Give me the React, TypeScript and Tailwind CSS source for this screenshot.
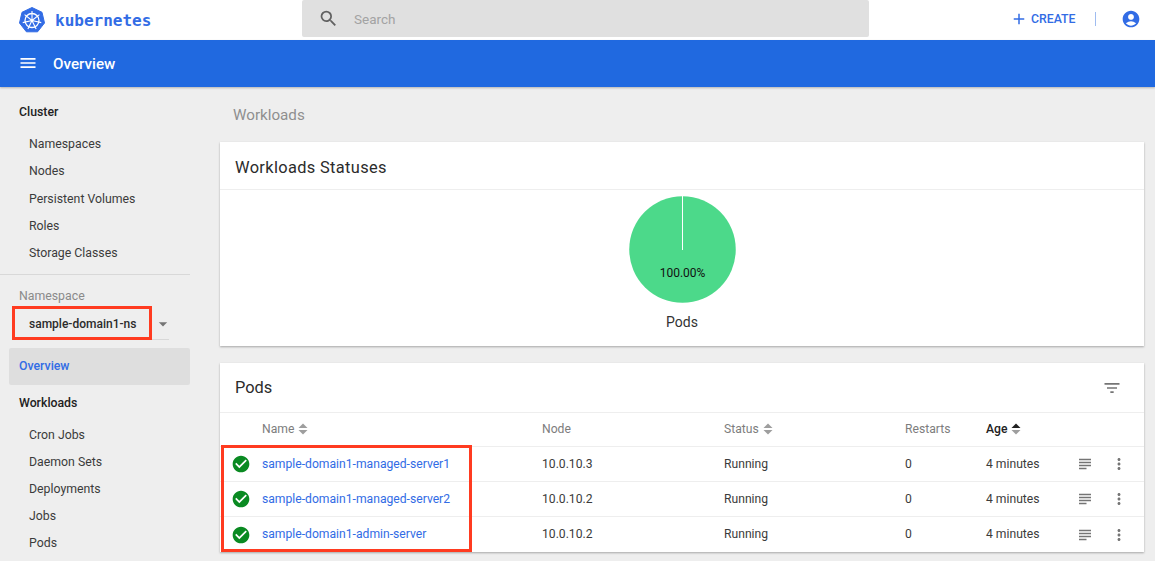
import { MdAccountCircle, MdAdd, MdArrowDropDown, MdCheckCircle, MdFilterList, MdMenu, MdMoreVert, MdSearch, MdSubject } from 'react-icons/md';

const clusterItems = ['Namespaces', 'Nodes', 'Persistent Volumes', 'Roles', 'Storage Classes'];
const workloadItems = ['Cron Jobs', 'Daemon Sets', 'Deployments', 'Jobs', 'Pods'];

const pods = [
  { name: 'sample-domain1-managed-server1', node: '10.0.10.3' },
  { name: 'sample-domain1-managed-server2', node: '10.0.10.2' },
  { name: 'sample-domain1-admin-server', node: '10.0.10.2' },
];

const gridCols = 'grid grid-cols-[42px_280px_182px_181px_81px_91px_34px_1fr] items-center';

function KubeLogo() {
  const spokes = [0, 51.4, 102.8, 154.3, 205.7, 257.1, 308.6];
  return (
    <svg width="26" height="26" viewBox="0 0 26 26">
      <path d="M13 0.5 L23 5.3 L25.5 16 L18.6 24.8 L7.4 24.8 L0.5 16 L3 5.3 Z" fill="#326ce5" stroke="#326ce5" strokeLinejoin="round" />
      <circle cx="13" cy="13.5" r="7" fill="none" stroke="#fff" strokeWidth="1.3" />
      <circle cx="13" cy="13.5" r="1.5" fill="#fff" />
      {spokes.map((deg) => (
        <line key={deg} x1="13" y1="13.5" x2="13" y2="4" stroke="#fff" strokeWidth="1.1" transform={`rotate(${deg} 13 13.5)`} />
      ))}
    </svg>
  );
}

function SortIcon({ active }: { active?: boolean }) {
  return (
    <svg width="10" height="12" viewBox="0 0 10 12" className="ml-[4px]">
      <path d="M5 0.5 L9.5 5 L0.5 5 Z" fill={active ? '#222' : '#9e9e9e'} />
      <path d="M5 11.5 L9.5 7 L0.5 7 Z" fill="#9e9e9e" />
    </svg>
  );
}

export default function App() {
  return (
    <div className="h-screen overflow-hidden bg-[#eeeeee] flex flex-col font-['Roboto',sans-serif]">
      {/* Top bar */}
      <header className="h-10 shrink-0 bg-white flex items-center">
        <div className="w-[302px] flex items-center pl-[19px] gap-[10px]">
          <KubeLogo />
          <span className="font-['DejaVu_Sans_Mono',monospace] font-bold text-[16px] text-[#326ce5] mt-[1px]">kubernetes</span>
        </div>
        <div className="w-[567px] h-[37px] mb-[3px] bg-[#e0e0e0] rounded-[2px] flex items-center pl-[16px]">
          <MdSearch className="text-[#616161] w-[21px] h-[21px]" />
          <span className="ml-[15px] mt-[1px] text-[13.5px] text-[#a3a3a3]">Search</span>
        </div>
        <div className="flex-1 flex items-center justify-end pr-[14px] mb-[2px]">
          <MdAdd className="text-[#326ce5] w-[18px] h-[18px]" />
          <span className="ml-[3px] text-[12.3px] font-medium text-[#326ce5]">CREATE</span>
          <div className="w-[1.5px] h-[14px] bg-[#9fbcf0] ml-[19px] mr-[25px]" />
          <MdAccountCircle className="text-[#326ce5] w-[20px] h-[20px]" />
        </div>
      </header>

      {/* Blue toolbar */}
      <div className="h-[47px] shrink-0 bg-[#2069e0] flex items-center pl-[18px] shadow-[0_1px_2px_rgba(0,0,0,0.25)] z-10">
        <MdMenu className="text-white w-[20px] h-[20px] mb-[2px]" />
        <span className="ml-[15px] mt-[2px] text-[15.2px] font-medium text-white">Overview</span>
      </div>

      <div className="flex-1 flex min-h-0">
        {/* Sidebar */}
        <aside className="w-[190px] shrink-0 relative pt-[12px]">
          <div className="h-[27px] pl-[19px] flex items-center text-[12.3px] font-medium text-[#212121]">Cluster</div>
          <div className="pt-[4.8px]">
            {clusterItems.map((item) => (
              <div key={item} className="h-[27.2px] pl-[29px] flex items-center text-[12.3px] text-[#3b3b3b]">{item}</div>
            ))}
          </div>
          <div className="mt-[7px] h-px bg-[#d8d8d8]" />
          <div className="mt-[14px] pl-[19px] text-[12.3px] leading-[15px] text-[#8a8a8a]">Namespace</div>
          <div className="ml-[19px] mr-[21px] h-[30px] mt-[6px] flex items-center justify-between border-b border-[#d8d8d8]">
            <span className="pl-[10px] text-[12px] font-medium text-[#2b2b2b]">sample-domain1-ns</span>
            <MdArrowDropDown className="text-[#757575] w-[20px] h-[20px] -mr-[4px]" />
          </div>
          <div className="ml-[9px] mt-[8px] h-[37px] pb-[1px] bg-[#dedede] rounded-[2px] flex items-center pl-[10px] text-[12.3px] font-medium text-[#326ce5]">Overview</div>
          <div className="h-[36px] pl-[19px] flex items-center text-[12.3px] font-medium text-[#212121]">Workloads</div>
          <div className="pt-[1px]">
            {workloadItems.map((item) => (
              <div key={item} className="h-[27px] pl-[29px] flex items-center text-[12.3px] text-[#3b3b3b]">{item}</div>
            ))}
          </div>
          {/* annotation box around the namespace picker */}
          <div className="absolute left-[12px] top-[219px] w-[140px] h-[34px] border-[3px] border-[#ff3b20]" />
        </aside>

        {/* Main content */}
        <main className="flex-1 pl-[30px] pr-[11px] min-w-0 relative">
          <div className="h-[55px] pl-[13px] pt-[19px] text-[15.2px] leading-[18px] text-[#8f8f8f]">Workloads</div>

          <section className="h-[204px] bg-white shadow-[0_1px_2px_rgba(0,0,0,0.3)] flex flex-col">
            <div className="h-[48px] shrink-0 pl-[15px] pt-[5px] flex items-center border-b-[1.5px] border-[#eeeeee] text-[16.4px] tracking-[0.35px] text-[#2b2b2b]">Workloads Statuses</div>
            <div className="flex flex-col items-center">
              <svg width="107" height="107" viewBox="0 0 107 107" className="mt-[6px] ml-[1px]">
                <circle cx="53.5" cy="53.5" r="53.25" fill="#4cd98a" />
                <line x1="53.5" y1="0" x2="53.5" y2="54" stroke="#fff" strokeWidth="1" />
                <text x="53.5" y="81" textAnchor="middle" fontSize="12" fill="#111">100.00%</text>
              </svg>
              <span className="mt-[9px] text-[14px] leading-[20px] text-[#333]">Pods</span>
            </div>
          </section>

          <section className="mt-[17px] bg-white shadow-[0_1px_2px_rgba(0,0,0,0.3)]">
            <div className="h-[50px] pl-[15px] pr-[22px] pt-[1px] flex items-center justify-between border-b-[1.5px] border-[#eeeeee]">
              <span className="text-[16.4px] text-[#2b2b2b]">Pods</span>
              <MdFilterList className="text-[#757575] w-[20px] h-[20px]" />
            </div>
            <div className={`${gridCols} h-[34px] border-b-[1.5px] border-[#eeeeee] text-[12.15px] text-[#7d7d7d]`}>
              <div />
              <div className="flex items-center">Name<SortIcon /></div>
              <div>Node</div>
              <div className="flex items-center">Status<SortIcon /></div>
              <div>Restarts</div>
              <div className="flex items-center font-medium text-[#212121]">Age<SortIcon active /></div>
            </div>
            {pods.map((pod, i) => (
              <div key={pod.name} className={`${gridCols} h-[35px] text-[12.15px] text-[#3b3b3b] ${i < pods.length - 1 ? 'border-b-[1.5px] border-[#eeeeee]' : ''}`}>
                <div className="pl-[11px]">
                  <MdCheckCircle className="text-[#0a8a22] w-[20px] h-[20px]" />
                </div>
                <div className="text-[#326ce5]">{pod.name}</div>
                <div>{pod.node}</div>
                <div>Running</div>
                <div>0</div>
                <div>4 minutes</div>
                <MdSubject className="text-[#757575] w-[18px] h-[18px] -ml-[1px]" />
                <MdMoreVert className="text-[#757575] w-[18px] h-[18px] -ml-[1px]" />
              </div>
            ))}
          </section>

          {/* annotation box around the pod names */}
          <div className="absolute left-[31px] top-[358px] w-[251px] h-[107px] border-[3px] border-[#ff3b20]" />
        </main>
      </div>
    </div>
  );
}
